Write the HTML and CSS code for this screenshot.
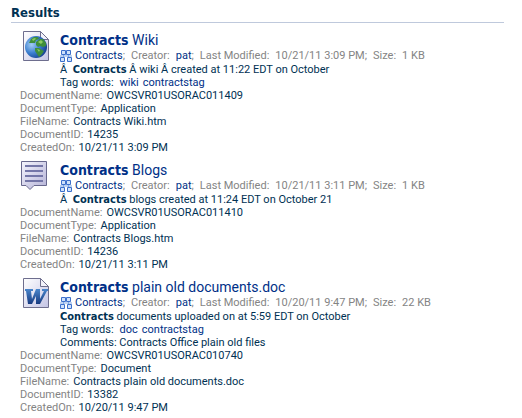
FILE: index.html
```html
<!DOCTYPE html>
<html lang="en">
<head>
<meta charset="utf-8">
<title>Results</title>
<link rel="stylesheet" href="styles.css">
</head>
<body>
<svg class="defs" aria-hidden="true">
  <defs>
    <linearGradient id="paper" x1="0" y1="0" x2="1" y2="1">
      <stop offset="0" stop-color="#ffffff"/><stop offset="1" stop-color="#c3c3e4"/>
    </linearGradient>
    <linearGradient id="bubble" x1="0" y1="0" x2="1" y2="1">
      <stop offset="0" stop-color="#f4f4fd"/><stop offset="1" stop-color="#b4b2d6"/>
    </linearGradient>
    <radialGradient id="ocean" cx=".3" cy=".4" r=".75">
      <stop offset="0" stop-color="#a4cdf4"/><stop offset=".5" stop-color="#3b7fd0"/><stop offset="1" stop-color="#123a88"/>
    </radialGradient>
    <linearGradient id="ink" x1="0" y1="0" x2="0" y2="1">
      <stop offset="0" stop-color="#4a86cc"/><stop offset="1" stop-color="#173a80"/>
    </linearGradient>
    <symbol id="page" viewBox="0 0 26 30">
      <path d="M.5.5h17l8 8v21H.5z" fill="url(#paper)" stroke="#6e6e8e"/>
      <path d="M17.5.5v8h8z" fill="#f2f2fa" stroke="#6e6e8e"/>
    </symbol>
    <symbol id="group" viewBox="0 0 12 12">
      <path d="M0 6h12M3.500 4v4M8.500 4v4" stroke="#7fa8e6" fill="none"/>
      <path d="M1.500.5h4v4h-4zM6.500.5h4v4h-4zM.5 7.500h4v4h-4zM7.500 7.500h4v4h-4z" fill="#cfe2fb" stroke="#3d70cc"/>
    </symbol>
  </defs>
</svg>
<main class="results">
  <h1 class="heading">Results</h1>
  <article class="result">
    <div class="summary">
      <svg class="icon" viewBox="0 0 28 30" aria-hidden="true">
        <use href="#page" x="2" width="26" height="30"/>
        <circle cx="15" cy="16" r="11" fill="url(#ocean)"/>
        <path d="M10 8l3-2 4 0 1 2-3 1-1 3-3 0-3 0zM15 11l4-3 3 0 3 4 0 3-3 1-3-1-2 1-2-2zM14 17l4 0 3 2 2 1-2 3-3 3-2-3-2-3z" fill="#3f8e3c"/>
        <path d="M11 8l3-1 1 1-3 2zM17 11l3-2 2 2-2 2zM16 18l3 1-1 2z" fill="#8ccb62"/>
      </svg>
      <div class="text">
        <h2 class="title"><a href="#"><b>Contracts</b> Wiki</a></h2>
        <p class="info"><svg class="group" aria-hidden="true"><use href="#group"/></svg><span class="part"><a href="#">Contracts</a>;</span><span class="part"><span class="key">Creator:</span><a href="#">pat</a>;</span><span class="part"><span class="key">Last Modified:</span>10/21/11 3:09 PM;</span><span class="part"><span class="key">Size:</span>1 KB</span></p>
        <p>Â&nbsp; <b>Contracts</b> Â wiki Â created at 11:22 EDT on October</p>
        <p><span class="label">Tag words:</span><a class="tag" href="#">wiki</a><a class="tag" href="#">contractstag</a></p>
      </div>
    </div>
    <dl class="fields">
      <div><dt>DocumentName:</dt><dd>OWCSVR01USORAC011409</dd></div>
      <div><dt>DocumentType:</dt><dd>Application</dd></div>
      <div><dt>FileName:</dt><dd>Contracts Wiki.htm</dd></div>
      <div><dt>DocumentID:</dt><dd>14235</dd></div>
      <div><dt>CreatedOn:</dt><dd>10/21/11 3:09 PM</dd></div>
    </dl>
  </article>
  <article class="result">
    <div class="summary">
      <svg class="icon" viewBox="0 0 28 30" aria-hidden="true">
        <path d="M.5.5h25v24H13l-4 4-4-4H.5z" fill="url(#bubble)" stroke="#68688e"/>
        <path d="M4 5h18M4 10h18M4 15h18M4 20h18" stroke="#7476a8" stroke-width="2"/>
      </svg>
      <div class="text">
        <h2 class="title"><a href="#"><b>Contracts</b> Blogs</a></h2>
        <p class="info"><svg class="group" aria-hidden="true"><use href="#group"/></svg><span class="part"><a href="#">Contracts</a>;</span><span class="part"><span class="key">Creator:</span><a href="#">pat</a>;</span><span class="part"><span class="key">Last Modified:</span>10/21/11 3:11 PM;</span><span class="part"><span class="key">Size:</span>1 KB</span></p>
        <p>Â&nbsp; <b>Contracts</b> blogs created at 11:24 EDT on October 21</p>
      </div>
    </div>
    <dl class="fields">
      <div><dt>DocumentName:</dt><dd>OWCSVR01USORAC011410</dd></div>
      <div><dt>DocumentType:</dt><dd>Application</dd></div>
      <div><dt>FileName:</dt><dd>Contracts Blogs.htm</dd></div>
      <div><dt>DocumentID:</dt><dd>14236</dd></div>
      <div><dt>CreatedOn:</dt><dd>10/21/11 3:11 PM</dd></div>
    </dl>
  </article>
  <article class="result">
    <div class="summary">
      <svg class="icon" viewBox="0 0 28 30" aria-hidden="true">
        <use href="#page" x="2" width="26" height="30"/>
        <path d="M4 11h8v2h-2l1 8 4-10h4v10l4-8h-2v-2h6v2h-1l-7 13h-4v-8l-4 8H7L5 13H4z" fill="url(#ink)"/>
      </svg>
      <div class="text">
        <h2 class="title"><a href="#"><b>Contracts</b> plain old documents.doc</a></h2>
        <p class="info"><svg class="group" aria-hidden="true"><use href="#group"/></svg><span class="part"><a href="#">Contracts</a>;</span><span class="part"><span class="key">Creator:</span><a href="#">pat</a>;</span><span class="part"><span class="key">Last Modified:</span>10/20/11 9:47 PM;</span><span class="part"><span class="key">Size:</span>22 KB</span></p>
        <p><b>Contracts</b> documents uploaded on at 5:59 EDT on October</p>
        <p><span class="label">Tag words:</span><a class="tag" href="#">doc</a><a class="tag" href="#">contractstag</a></p>
        <p>Comments: Contracts Office plain old files</p>
      </div>
    </div>
    <dl class="fields">
      <div><dt>DocumentName:</dt><dd>OWCSVR01USORAC010740</dd></div>
      <div><dt>DocumentType:</dt><dd>Document</dd></div>
      <div><dt>FileName:</dt><dd>Contracts plain old documents.doc</dd></div>
      <div><dt>DocumentID:</dt><dd>13382</dd></div>
      <div><dt>CreatedOn:</dt><dd>10/20/11 9:47 PM</dd></div>
    </dl>
  </article>
</main>
</body>
</html>
```
FILE: styles.css
```css
body {
  margin: 0;
  background: #fff;
  color: #003153;
  font: 11px/13px Roboto, "Liberation Sans", sans-serif;
}
h1, h2, p, dl, dd { margin: 0; }
a { color: #003087; text-decoration: none; }
b, .heading {
  font-family: "DejaVu Sans Condensed", "DejaVu Sans", sans-serif;
  line-height: 1;
}
.defs { position: absolute; width: 0; height: 0; }
.results { padding: 3px 18px 4px 11px; }
.heading {
  margin-bottom: 1px;
  border-bottom: 1px solid #bfc9dc;
  font-size: 13px;
  line-height: 19px;
}
.result { padding: 8px 0 0 9px; }
.summary { display: flex; gap: 11px; }
.icon { flex: none; width: 28px; height: 30px; margin: -1px 0 0 1px; }
.text { min-width: 0; }
.title {
  font-size: 14px;
  font-weight: normal;
  line-height: 16px;
}
.info {
  display: flex;
  align-items: center;
  height: 15px;
  color: #848484;
  white-space: nowrap;
}
.group { flex: none; width: 12px; height: 12px; margin-right: 3px; }
.part { margin-right: 6px; }
.key, .label { margin-right: 6px; }
.tag { margin-right: 4px; }
.fields div { display: flex; gap: 4px; }
.fields dt { color: #848484; }
```
